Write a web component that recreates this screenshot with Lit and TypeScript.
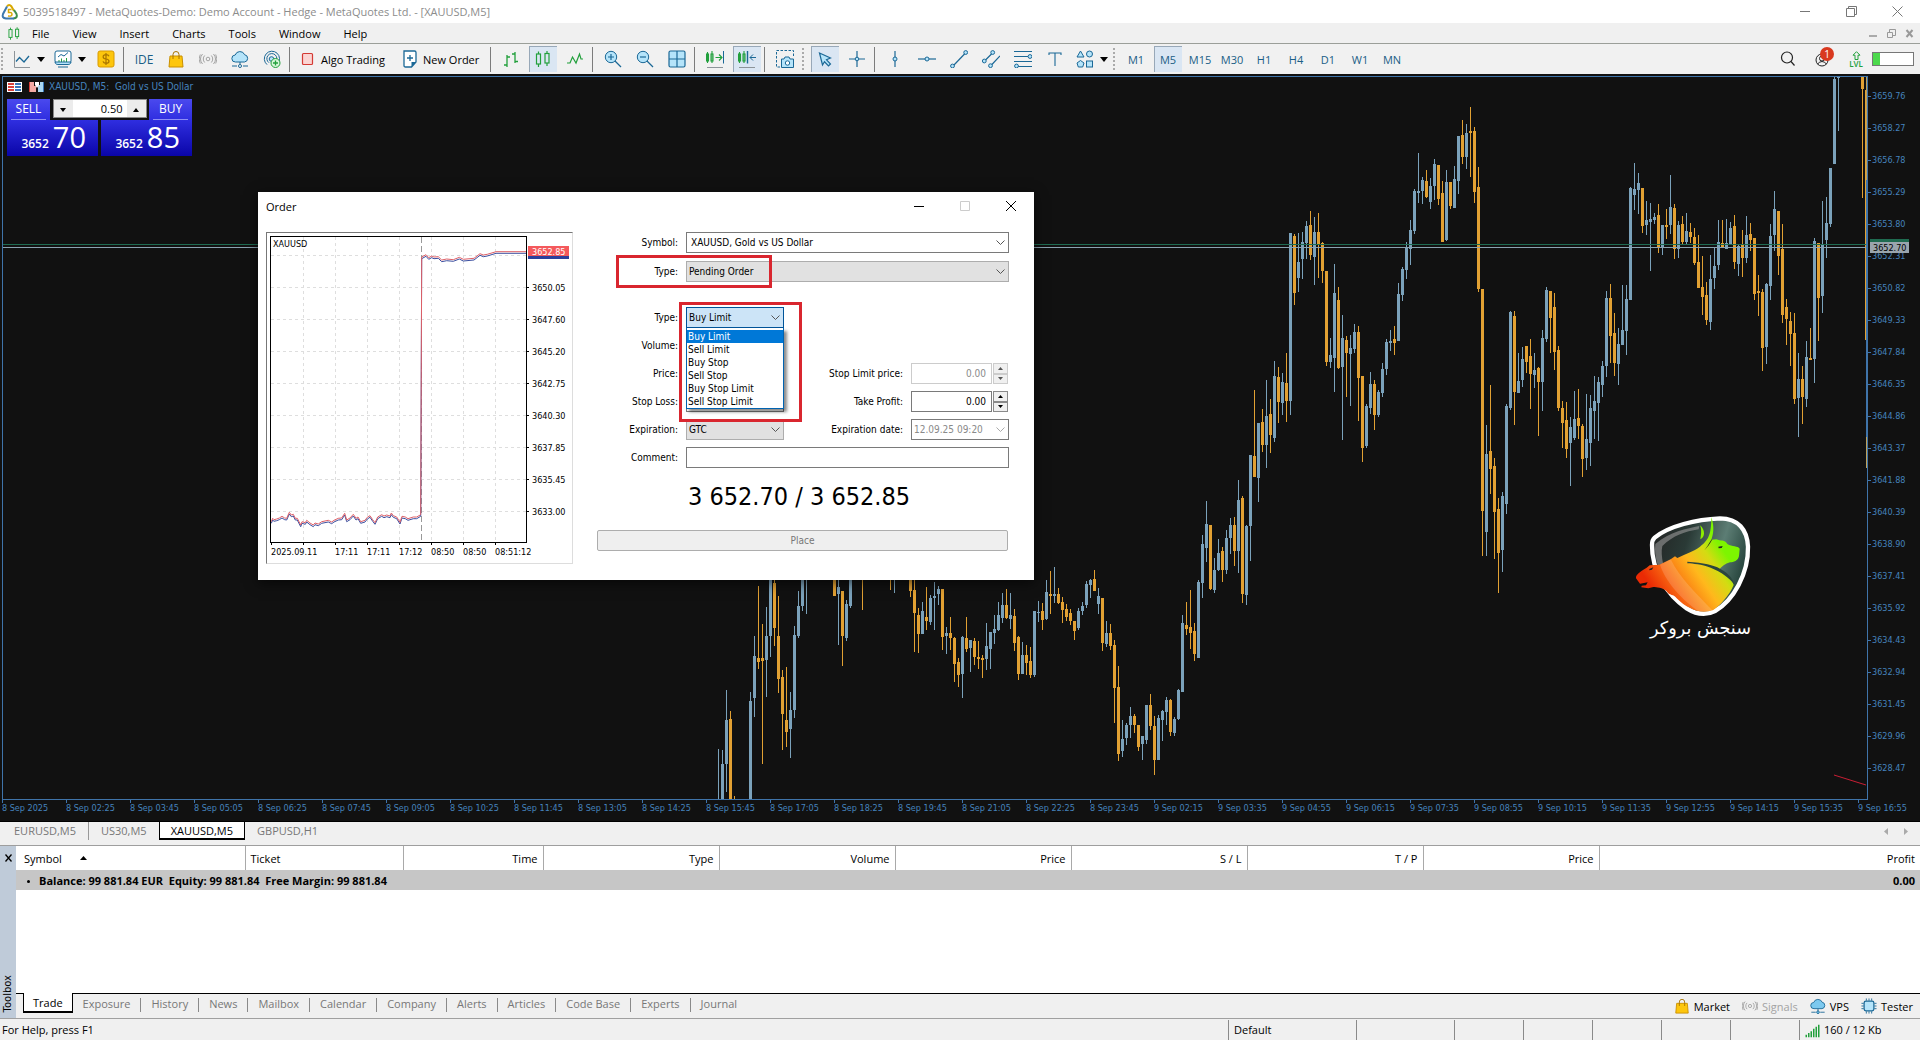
import { LitElement, html, svg, css, TemplateResult } from "lit";
import { customElement, state } from "lit/decorators.js";
import { classMap } from "lit/directives/class-map.js";

/* ---------- icons ---------- */

const BLUE = "#1b6896";
const SKY = "#b5e4fa";
const GREEN = "#22a03c";

const icons: Record<string, TemplateResult> = {
  line: svg`<path d="M1.5 1v16.5H17" stroke="#8d9499"/><path d="M3 11.5 6.500 7.500 11 12l5-6" stroke=${BLUE} stroke-width="1.300"/>`,
  indicators: svg`<rect x="1" y="1" width="16" height="12" rx="2" fill="#fff" stroke=${BLUE}/><path d="M4 7l3-2.500 3 1.500 4-3.500" stroke=${BLUE}/><path d="M5 12V10M7.500 12V8.500M10 12V10M12.500 12V8" stroke=${GREEN}/><path d="M1 12h16c0 2-2 2.500-3 2.500H4c-1 0-3-.5-3-2.500zM4 17h10" fill=${SKY} stroke=${BLUE}/>`,
  dollar: svg`<rect x="1" y="1" width="16" height="16" rx="2" fill="#fdc60d" stroke="#d99a00"/><path d="M12 6.300C11.500 5 10.500 4.700 9 4.700c-3.800 0-3.800 3.900 0 4.300 4 .4 4 4.300 0 4.300-1.600 0-2.700-.6-3-1.900M9 3v12" stroke="#a87400" stroke-width="1.200"/>`,
  bag: svg`<path d="M3 6h12l1 11H2z" fill="#fdc60d" stroke="#c98f00"/><path d="M6 9V4.500a3 3 0 0 1 6 0V9" stroke="#a87400"/>`,
  signal: svg`<g stroke="#a3a3a3"><circle cx="9" cy="9" r="1.800"/><path d="M5.700 5.500a5 5 0 0 0 0 7M12.300 5.500a5 5 0 0 1 0 7M3.500 4a8 8 0 0 0 0 10M14.500 4a8 8 0 0 1 0 10M1.300 4.500a9 9 0 0 0 0 9M16.700 4.500a9 9 0 0 1 0 9"/></g>`,
  cloud: svg`<path d="M4.500 12a3.500 3.500 0 0 1-.3-7 5 5 0 0 1 9.400-.3A3.700 3.700 0 0 1 13.500 12z" fill=${SKY} stroke=${BLUE}/><path d="M9 12v2.500M1 16h5M12 16h5" stroke=${BLUE}/><circle cx="9" cy="16" r="1.500" fill="#fff" stroke=${BLUE}/>`,
  vps: svg`<path d="M9 12v3M1.500 16h5M11.500 16h5" stroke=${BLUE}/><path d="M4.500 12a3.500 3.500 0 0 1-.3-7 5 5 0 0 1 9.400-.3A3.700 3.700 0 0 1 13.500 12z" fill="#7cc9ef" stroke=${BLUE}/><circle cx="9" cy="16" r="1.500" fill="#7cc9ef" stroke=${BLUE}/>`,
  radar: svg`<g stroke=${BLUE}><path d="M14.500 14A7.600 7.600 0 1 0 4 14.600"/><path d="M12.500 12A5 5 0 1 0 6 12.700"/><circle cx="8.500" cy="9" r="2.300" fill=${SKY}/></g><circle cx="12.500" cy="13" r="4.500" fill="#d8f6da" stroke=${GREEN}/><path d="M12.500 10.500v5M10 13h5" stroke=${GREEN} stroke-width="1.300"/>`,
  algo: svg`<rect x="3.500" y="3.500" width="10" height="11" rx="1" fill="#fbd5d3" stroke="#d43a34" stroke-width="1.200"/>`,
  order: svg`<path d="M3 1h10.500Q15 1 15 2.500V12l-4.500 5H4.500Q3 17 3 15.500z" fill="#fff" stroke=${BLUE} stroke-width="1.300"/><path d="M15 12h-4.500v5z" fill=${BLUE}/><path d="M9 5v6M6 8h6" stroke=${BLUE} stroke-width="1.300"/>`,
  bars: svg`<g stroke=${GREEN} stroke-width="1.300"><path d="M5 5v12M5 7h3M2 15h3M13 2v11M10 4h3M13 11.500h3"/></g>`,
  candles: svg`<g stroke=${GREEN} stroke-width="1.200"><rect x="2.500" y="4" width="4" height="10"/><path d="M4.500 1.500V4M4.500 14v3M13 1v2.500M13 13v3"/><rect x="11" y="3.500" width="4" height="9.500"/></g>`,
  zigzag: svg`<path d="M1 13h3l2.500-6 3.500 6 3.500-9L15 9h2" stroke=${GREEN} stroke-width="1.200"/>`,
  zoomin: svg`<circle cx="7" cy="7" r="5.700" fill=${SKY} stroke=${BLUE}/><path d="M11 11l6 6" stroke=${BLUE} stroke-width="1.300"/><path d="M4 7h6M7 4v6" stroke=${BLUE} stroke-width="1.200"/>`,
  zoomout: svg`<circle cx="7" cy="7" r="5.700" fill=${SKY} stroke=${BLUE}/><path d="M11 11l6 6" stroke=${BLUE} stroke-width="1.300"/><path d="M4 7h6" stroke=${BLUE} stroke-width="1.200"/>`,
  tile: svg`<rect x="1" y="1" width="16" height="16" rx="1.500" fill=${SKY} stroke=${BLUE} stroke-width="1.200"/><path d="M9 1v16M1 9h16" stroke=${BLUE} stroke-width="1.200"/>`,
  scroll: svg`<g stroke=${GREEN} stroke-width="1.100"><rect x="0.500" y="4" width="2" height="7"/><rect x="5" y="4" width="2" height="7"/><path d="M1.500 2v11M6 1v12M9.500 7.500h6M13 4.500l3 3-3 3"/></g><path d="M17.500 1v12.500" stroke=${BLUE}/><path d="M1 17.500h16" stroke="#8d9499"/>`,
  shift: svg`<g stroke=${GREEN} stroke-width="1.100"><rect x="0.500" y="4" width="2" height="7"/><rect x="5" y="4" width="2" height="7"/><path d="M1.500 2v11M6 1v12"/></g><path d="M9.500 1v12.500" stroke=${BLUE} stroke-width="1.400"/><path d="M12 7.500h6M15 4.500l-3 3 3 3" stroke=${BLUE}/><path d="M1 17.500h16" stroke="#8d9499"/>`,
  camera: svg`<path d="M4 17H.5V.5h17V6" stroke=${BLUE} stroke-dasharray="2.500 1.500"/><path d="M5.500 9h2.500l1-2h4l1 2h3.500v8.500h-12z" fill=${SKY} stroke=${BLUE}/><circle cx="11.500" cy="13" r="2.200" fill="#fff" stroke=${BLUE}/>`,
  cursor: svg`<path d="M3.500 3l11 5-4 1.800 4 4.200-2 2-4-4.200L6.500 15z" fill=${SKY} stroke=${BLUE} stroke-width="1.200"/>`,
  cross: svg`<path d="M9 1v16M1 9h16" stroke=${BLUE} stroke-width="1.200"/><circle cx="9" cy="9" r="1.800" fill=${SKY} stroke=${BLUE}/>`,
  vline: svg`<path d="M9 1v16" stroke=${BLUE} stroke-width="1.200"/><circle cx="9" cy="9" r="2" fill=${SKY} stroke=${BLUE}/>`,
  hline: svg`<path d="M0 9h18" stroke=${BLUE} stroke-width="1.200"/><circle cx="9" cy="9" r="2" fill=${SKY} stroke=${BLUE}/>`,
  trend: svg`<path d="M3 16L15.500 3" stroke=${BLUE} stroke-width="1.200"/><circle cx="2.500" cy="16" r="1.900" fill=${SKY} stroke=${BLUE}/><circle cx="15.700" cy="2.500" r="1.900" fill=${SKY} stroke=${BLUE}/>`,
  channel: svg`<path d="M2.500 11L11 2.500M8.500 16L18 6" stroke=${BLUE} stroke-width="1.200"/><circle cx="2.300" cy="11" r="1.900" fill=${SKY} stroke=${BLUE}/><circle cx="10.700" cy="2.500" r="1.900" fill=${SKY} stroke=${BLUE}/><circle cx="8.500" cy="15.700" r="1.900" fill=${SKY} stroke=${BLUE}/>`,
  fibo: svg`<path d="M0 1.500h18M0 6.500h14M0 11.500h18M4 16.500h14" stroke=${BLUE} stroke-width="1.200"/><circle cx="16" cy="6.500" r="1.900" fill=${SKY} stroke=${BLUE}/><circle cx="2.500" cy="16" r="1.900" fill=${SKY} stroke=${BLUE}/>`,
  text: svg`<path d="M3 5V3h12v2M9 3v13" stroke=${BLUE} stroke-width="1.100"/>`,
  shapes: svg`<g fill=${SKY} stroke=${BLUE}><path d="M4.500 1l3.500 6H1z"/><circle cx="13.500" cy="4" r="3"/><path d="M4.500 10.500L8 13l-1.300 4H2.300L1 13z"/><rect x="10.500" y="11" width="6" height="6"/></g>`,
  search: svg`<circle cx="8" cy="7.500" r="5.500" stroke="#222" stroke-width="1.200"/><path d="M12 11.500l3.500 4" stroke="#222" stroke-width="1.200"/>`,
  chip: svg`<rect x="3.500" y="3.500" width="11" height="11" rx="2" fill=${SKY} stroke=${BLUE} stroke-width="1.400"/><path d="M6 3V.5M9 3V.5M12 3V.5M6 17.500V15M9 17.500V15M12 17.500V15M3 6H.5M3 9H.5M3 12H.5M17.500 6H15M17.500 9H15M17.500 12H15" stroke=${BLUE}/>`,
  network: svg`<path d="M1.500 17v-3M4.500 17v-5M7.500 17V10M10.500 17V7M13.500 17V4.500M16.500 17V2" stroke=${GREEN} stroke-width="1.800"/>`,
};

const icon = (name: string, cls = "ico") =>
  html`<svg class=${cls} viewBox="0 0 18 18" fill="none" aria-hidden="true">${icons[name]}</svg>`;

/* ---------- candle data: direction, high, open/close top, bottom, low ---------- */

const SEGMENTS: [number, string][] = [
  [718, `u749 800 801 801,u750 764 801 801,u690 720 764 792,d711 719 801 801,d796 800 801 801`],
  [746, `d799 800 801 801,u692 701 801 801,u636 656 698 717,d586 658 662 669,d624 658 661 764,u607 636 660 697,u575 575 636 657,
d575 583 628 646,d596 636 679 693,d670 677 714 750,d667 720 732 747,u692 710 729 758,u626 635 710 718,u591 606 636 638,
u570 570 606 611,u570 570 571 614`],
  [834, `d570 570 596 596,u580 587 594 645,d591 591 636 666,u600 604 638 641,u570 570 606 608`],
  [862, `d570 570 571 610`],
  [890, `d570 570 571 590,u570 570 571 593`],
  [910, `d570 570 591 597,d570 590 613 652,d608 615 634 653,u602 611 634 634,d587 617 621 630,u595 598 622 625,u582 596 598 630,
u586 589 594 605,d589 589 637 650,u627 633 636 654,d617 633 638 650,d637 638 664 682,d658 662 675 687,u636 637 674 698,
d617 638 649 652,u640 640 648 672,d638 641 657 665,d641 657 659 669,d655 658 660 678,u623 646 659 670,u632 632 649 669,
u615 629 633 644,u602 615 630 631,u593 605 618 623,d589 605 618 619,u593 615 619 629,d609 616 643 651,d636 637 674 680,
u642 655 674 674,d645 655 663 675,d647 661 675 678,u611 611 675 677,u601 612 613 622,d603 611 620 630,u580 592 619 620,
d571 594 596 614,u567 594 596 603,d588 594 603 604,d597 602 610 623,d604 609 617 621,d609 613 621 625,d621 621 631 640,
u608 611 628 630,u602 606 611 615,u581 584 605 608,u579 580 585 598,d570 579 591 591,u588 596 604 614,d598 598 643 651,
u621 633 644 647,d624 633 646 650,d640 645 688 723,d666 687 754 761,u720 739 751 757,u723 725 738 745,u707 716 725 738,
d714 716 725 733,d725 725 747 751,u736 736 744 760,u705 705 740 744,d694 705 726 730,d716 726 760 775,u715 718 760 760,
u710 711 720 741,u697 700 712 725,d699 700 732 736,u717 719 733 736,u689 690 719 720,u615 623 692 692,d602 625 629 635,
d590 627 633 649,d623 631 654 661,u580 582 658 658,u535 544 583 598,u501 524 548 562,d525 525 589 590,u558 570 590 593,
u539 553 570 571,d547 551 570 582,u530 538 570 574,u518 525 538 554,d517 525 551 566,u480 500 551 573,d496 498 594 603,
u525 526 595 605,u455 455 526 561,d390 456 477 477,u423 423 478 502,d409 422 445 452,u380 416 445 468,d399 414 435 453,
u361 376 438 442,d367 377 402 423,u373 382 403 415,d353 383 401 422,u233 233 401 415,d234 236 293 305,u233 262 278 292,
u232 242 259 279,u221 226 243 259,d211 225 255 260,u217 232 257 285,d213 232 244 278,d242 243 271 283,d271 271 362 366,
u338 355 362 368,u264 293 358 392,d287 300 368 369,u315 338 367 440,d336 340 353 397,u335 348 354 406,u324 332 349 353,
d326 332 378 421,d376 376 448 462,u404 406 446 448,u372 384 408 414,d380 384 415 430,u390 392 415 417,u363 369 393 397,
u339 342 369 375,u330 341 343 351,d326 339 343 355,u283 294 341 341,u267 269 295 301,u242 248 270 279,u220 230 249 265,
u189 191 231 234,u153 191 193 203,u177 180 191 204,d170 181 197 198,u178 186 202 209,u159 164 186 200,d165 165 199 205,
d181 193 242 242,u170 182 240 241,d182 182 206 209,u166 179 208 208,u136 136 181 194,d120 135 157 164,u124 133 157 169,
d107 131 133 177,d127 131 192 203,d167 187 289 292,d289 289 511 556,u425 454 532 556,d385 451 469 494,d458 466 512 559,
d498 509 553 593,u492 496 550 572,u404 406 504 514,u311 312 408 410,d311 316 392 425,u353 381 393 393,u347 359 380 387,
d346 346 362 373,d339 356 374 409,u353 370 375 388,d367 368 382 436,u330 338 382 411,u287 290 339 342,d291 291 318 353,
d293 307 352 370,d346 350 408 411,d401 408 423 448,d402 420 449 458,u417 427 443 486,u391 419 438 440,d389 418 426 439,
d424 426 459 477,u394 439 458 470,u395 408 443 466,u376 401 411 439,u377 382 403 441,u361 366 385 397,u291 298 366 377,
d284 298 336 363,d313 333 363 376,u328 344 364 385,u285 330 345 345,u285 299 331 355,u187 188 300 300,u163 189 195 210,
u173 183 190 214,d188 188 226 233,u201 220 225 235,u203 219 222 271,u213 217 220 224,d204 215 248 253,u225 225 248 255,
d209 225 227 239,u175 207 225 234,d204 208 249 259,u221 225 249 258,d216 224 242 245,u213 231 242 245,d223 232 237 243,
d228 237 263 265,d235 262 288 288,d256 287 297 315,d282 295 320 325,u255 279 322 330,u248 266 278 289,u220 242 265 270,
d220 243 248 248,u219 243 249 249,u222 228 244 244,d215 226 262 269,u245 246 264 276,d230 244 258 277,u216 235 258 263,
d223 234 240 251,d238 238 294 300,d275 291 293 316,d289 292 348 371,u283 284 347 364,u224 236 286 300,u191 209 235 251,
d211 211 256 275,d224 249 315 323,d299 307 319 345,d312 321 334 366,d313 333 399 404,u353 379 398 437,d366 379 397 424,
u341 357 399 407,d328 358 360 360,u238 241 359 383,d243 243 298 341,u201 245 296 313,u197 223 240 258,u168 168 224 227,
u77 79 164 164,u77 77 78 131`],
  [1862, `d77 77 89 198,d77 90 340 340`],
];

function candlePaths(): { u: string; d: string } {
  const out = { u: "", d: "" };
  for (const [x0, rows] of SEGMENTS) {
    rows.split(",").forEach((row, i) => {
      const r = row.trim();
      const dir = r[0] as "u" | "d";
      const [hi, top, bot, lo] = r.slice(1).split(" ").map(Number);
      const x = x0 + i * 4;
      out[dir] += `M${x} ${hi}h1V${lo}h-1zM${x - 1} ${top}h3V${bot}h-3z`;
    });
  }
  return out;
}
const CANDLES = candlePaths();

const TIMES = [
  "8 Sep 2025", "8 Sep 02:25", "8 Sep 03:45", "8 Sep 05:05", "8 Sep 06:25", "8 Sep 07:45", "8 Sep 09:05", "8 Sep 10:25",
  "8 Sep 11:45", "8 Sep 13:05", "8 Sep 14:25", "8 Sep 15:45", "8 Sep 17:05", "8 Sep 18:25", "8 Sep 19:45", "8 Sep 21:05",
  "8 Sep 22:25", "8 Sep 23:45", "9 Sep 02:15", "9 Sep 03:35", "9 Sep 04:55", "9 Sep 06:15", "9 Sep 07:35", "9 Sep 08:55",
  "9 Sep 10:15", "9 Sep 11:35", "9 Sep 12:55", "9 Sep 14:15", "9 Sep 15:35", "9 Sep 16:55",
];
const PRICES = Array.from({ length: 22 }, (_, i) => (3659.76 - i * 1.49).toFixed(2));

/* ---------- price chart ---------- */

@customElement("price-chart")
export class PriceChart extends LitElement {
  static styles = css`
    :host {
      display: grid; position: relative; flex: 1; min-height: 0; overflow: hidden;
      grid-template-columns: minmax(0, 1fr) 52px; grid-template-rows: minmax(0, 1fr) 21px;
      padding: 2px 0 0 2px; background: #111; color: #4583bd;
      font: 9px/12px "DejaVu Sans Condensed", "DejaVu Sans", sans-serif;
      border-bottom: 1px solid #000; box-sizing: border-box;
    }
    button { font: inherit; border: 0; padding: 0; margin: 0; cursor: default; }
    .plot { position: relative; border: 1px solid #3f74aa; min-width: 0; min-height: 0; overflow: hidden; }
    .candles { display: block; width: 100%; height: 100%; }
    .prices { position: relative; display: flex; flex-direction: column; padding-top: 4px; overflow: hidden; }
    .prices span { flex: none; height: 32px; display: flex; align-items: center; gap: 1px; }
    .prices span::before { content: ""; width: 3px; height: 1px; background: #3f74aa; }
    .tag { position: absolute; left: 2px; top: 163px; width: 39px; box-sizing: border-box; padding-left: 3px; font-weight: 400;
      height: 14px; line-height: 12px; border-top: 3px solid #1f6b50; background: #9aa5ad; color: #000; }
    .times { display: flex; grid-column: 1 / 3; overflow: hidden; }
    .times span { flex: none; width: 64px; white-space: nowrap; line-height: 17px; position: relative; }
    .times span::before { content: ""; display: block; width: 1px; height: 3px; margin-bottom: -3px; background: #3f74aa; }
    .head { position: absolute; left: 7px; top: 7px; display: flex; align-items: center; gap: 5px; white-space: pre; height: 12px; font-size: 10px; }
    .head svg { width: 15px; height: 10px; }
    .head svg + svg { margin-left: 2px; }
    .trade { position: absolute; left: 7px; top: 25px; width: 185px; }
    .row { display: flex; justify-content: space-between; }
    .trade button { color: #fff; font-family: "Open Sans", sans-serif; }
    .trade .side { width: 43px; height: 21px; font-size: 12px; background: linear-gradient(#4a49ee, #2f2ee0); }
    .side span { display: block; margin: 0 4px; line-height: 20px; border-bottom: 1px solid #8f8ff5; }
    .vol { display: flex; height: 19px; border: 1px solid #888; box-sizing: border-box; width: 94px; background: #fff; }
    .vol input { flex: 1; min-width: 0; border: 0; padding: 0 4px 0 0; text-align: right; outline: 0;
      font: 11px "Open Sans", sans-serif; color: #000; background: #fff; }
    .trade .vol button { width: 19px; background: #ececec; color: #000; font-size: 8px; }
    .vol svg { width: 6px; height: 4px; }
    .trade .price { width: 91px; height: 36px; display: flex; align-items: flex-end; justify-content: flex-end;
      padding: 0 12px 5px 0; box-sizing: border-box; gap: 4px; background: linear-gradient(#2f2ee0, #0a05a8); }
    .small { font-size: 12px; line-height: 14px; font-weight: 600; }
    .big { font-size: 29px; line-height: 24px; height: 26px; }
    .logo { position: absolute; right: 167px; top: 439px; width: 120px; height: 128px; }
    .logo text { font: 53px "DejaVu Sans", sans-serif; fill: #fff; }
  `;

  render() {
    return html`
      <div class="plot">
        <svg class="candles" viewBox="3 77 1864 723" preserveAspectRatio="xMaxYMin slice" shape-rendering="crispEdges" role="img" aria-label="XAUUSD M5">
          <path d=${CANDLES.u} fill="#7ba2bb" />
          <path d=${CANDLES.d} fill="#e2a133" />
          <path d="M3 244h1864v1H3z" fill="#1f6b52" />
          <path d="M3 247h1864v1H3z" fill="#8ba3b2" />
          <path d="M1866 180h1v257h-1z" fill="#3f74aa" />
          <path d="M1866 437h1v31h-1zM1866 77h1v103h-1z" fill="#bda25c" />
          <path d="M1834 775l32 10" stroke="#c81e34" fill="none" shape-rendering="auto" />
        </svg>
      </div>
      <div class="prices">${PRICES.map((p) => html`<span>${p}</span>`)}<b class="tag">3652.70</b></div>
      <div class="times">${TIMES.map((t) => html`<span>${t}</span>`)}</div>
      <div class="head">
        <svg viewBox="0 0 15 10"><path d="M0 0h15v10H0z" fill="#fff"/><path d="M1 1h6v2H1zM1 4h6v2H1zM1 7h6v2H1z" fill="#d8403a"/><path d="M8 1h6v2H8zM8 4h6v2H8zM8 7h6v2H8z" fill="#3673b8"/></svg>
        <svg viewBox="0 0 15 10"><path d="M0 0h5v4h2v6H0z" fill="#f3aaa5"/><path d="M15 0h-4v3H9v7h6z" fill="#a9d6f2"/><path d="M6 0h4v3l-2 3-2-3z" fill="#fff"/><path d="M0 0h1v10H0z" fill="#d8403a"/><path d="M14 0h1v10h-1z" fill="#3673b8"/></svg>
        <span>XAUUSD, M5:  Gold vs US Dollar</span>
      </div>
      <div class="trade">
        <div class="row">
          <button class="side"><span>SELL</span></button>
          <div class="vol">
            <button aria-label="Decrease volume"><svg viewBox="0 0 6 4"><path d="M0 0h6L3 4z"/></svg></button>
            <input aria-label="Volume" .value=${"0.50"} />
            <button aria-label="Increase volume"><svg viewBox="0 0 6 4"><path d="M0 4h6L3 0z"/></svg></button>
          </div>
          <button class="side"><span>BUY</span></button>
        </div>
        <div class="row">
          <button class="price"><span class="small">3652</span><span class="big">70</span></button>
          <button class="price"><span class="small">3652</span><span class="big">85</span></button>
        </div>
      </div>
      <svg class="logo" viewBox="399 129 360 384" role="img" aria-label="سنجش بروکر">
        <defs>
          <linearGradient id="back" x1="0" y1="0" x2="1" y2="0.300"><stop offset="0" stop-color="#222"/><stop offset="0.400" stop-color="#2a3a36"/><stop offset="0.750" stop-color="#5c7d74"/><stop offset="1" stop-color="#2c4a42"/></linearGradient>
          <linearGradient id="beast" gradientUnits="userSpaceOnUse" x1="450" y1="370" x2="680" y2="215"><stop offset="0.050" stop-color="#ea2a04"/><stop offset="0.280" stop-color="#f96a12"/><stop offset="0.550" stop-color="#ffb81c"/><stop offset="0.750" stop-color="#d3dc12"/><stop offset="0.920" stop-color="#7df500"/></linearGradient>
        </defs>
        <path d="M464 203C505 168 590 148 660 145C715 145 742 180 744 230C746 310 700 392 645 423C620 436 590 434 560 415C500 375 455 300 456 225Q456 210 464 203Z" fill="url(#back)" stroke="#fff" stroke-width="13"/>
        <path d="M466 222C510 184 560 176 598 168L596 178C555 185 520 196 487 228Q482 250 490 285L474 288Q462 250 466 222Z" fill="#999" opacity=".6"/>
        <path d="M408 325C407 315 415 308 440 293L449 286L478 284L512 268L525 259L532 264C560 250 580 245 600 230C622 212 634 200 634 141C644 172 640 192 634 209L649 208C662 214 674 208 682 222C696 231 714 227 719 236L717 258C715 272 700 277 690 277C675 281 665 290 658 298C684 310 696 330 701 345C690 375 655 412 638 421C600 434 560 415 530 385C522 372 508 378 500 364C488 352 470 352 460 351L445 355L424 352L425 347L438 346L443 337L420 341Z" fill="url(#beast)"/>
        <path d="M600 166C606 180 603 196 601 208C615 203 617 180 600 166Z" fill="#8df000"/>
        <path d="M562 275C612 279 640 284 660 296C690 312 700 330 703 343C690 325 664 306 632 293C604 283 580 281 562 280Z" fill="#2b463e"/>
        <path d="M612 242C622 232 630 222 637 208L634 209C626 222 620 232 612 242ZM655 230l13-2-3 6-9 1zM448 297l12-5-4 7-8 2z" fill="#222"/>
        <path d="M480 284C500 345 560 400 603 429Q625 428 637 421C590 372 540 325 512 268Z" fill="#fff" opacity=".16"/>
        <text x="753" y="492" direction="rtl">سنجش بروکر</text>
      </svg>
    `;
  }
}

/* ---------- order dialog ---------- */

const TICKS: [number, number][] = [
  [64, 1010], [68, 1000], [72, 1004], [80, 1002], [88, 999], [96, 994], [104, 999], [110, 1000], [118, 982], [124, 990], [130, 988], [136, 1000], [142, 1000],
  [152, 1020], [156, 1010], [166, 1013], [170, 1006], [180, 1014], [190, 1020], [195, 1014], [205, 1017], [215, 1010], [235, 1006], [245, 1011], [252, 1006],
  [265, 1000], [275, 999], [284, 985], [290, 1005], [300, 999], [310, 988], [318, 1000], [324, 996], [332, 1010], [345, 1006], [352, 997], [360, 992],
  [368, 1004], [375, 1013], [383, 996], [395, 989], [402, 993], [410, 990], [420, 993], [424, 984], [430, 992], [440, 996], [450, 1012], [456, 994],
  [466, 996], [474, 1001], [490, 996], [500, 996], [512, 989], [515, 216], [528, 209], [536, 218], [545, 213], [552, 216], [565, 215], [575, 225],
  [590, 222], [610, 224], [628, 217], [640, 223], [672, 220], [690, 206], [700, 210], [712, 208], [738, 200], [829, 200],
];
const tickPath = (dy: number) => TICKS.map(([x, y]) => `${(250 + x / 3).toFixed(1)},${(185 + (y + dy) / 3).toFixed(1)}`).join(" ");

@customElement("order-dialog")
export class OrderDialog extends LitElement {
  @state() private kind = "Buy Limit";

  static styles = css`
    :host { display: block; position: absolute; left: 258px; top: 192px; width: 776px; height: 388px; box-sizing: border-box;
      background: #fff; color: #000; box-shadow: 0 3px 12px rgba(0, 0, 0, 0.6);
      font: 10px/14px "DejaVu Sans Condensed", "DejaVu Sans", sans-serif; }
    button, input, select { font: inherit; color: inherit; margin: 0; box-sizing: border-box; border-radius: 0; outline: 0; }
    header { display: flex; align-items: center; height: 28px; padding-left: 8px; font: 11px "Open Sans", sans-serif; }
    header h2 { flex: 1; margin: 0; font: inherit; }
    header button { width: 46px; height: 28px; padding: 0; border: 0; background: none; }
    header svg { width: 10px; height: 10px; display: block; margin: auto; }
    .body { display: grid; grid-template-columns: 307px 412px; justify-content: space-between; padding: 12px 25px 0 8px; }
    .ticks { box-sizing: border-box; width: 307px; height: 332px; display: block; border: 1px solid #ddd; border-top-color: #777; border-left-color: #777; }
    .ticks text { font: 9px "DejaVu Sans Condensed", "DejaVu Sans", sans-serif; }
    .form { display: grid; grid-template-columns: 81px 98px 1fr 98px; column-gap: 8px; align-content: start; }
    .form > label { text-align: right; align-self: center; white-space: nowrap; }
    .wide { grid-column: 2 / 5; }
    .tall { height: 21px; }
    .std { height: 21px; margin-bottom: 7px; }
    label.std { height: auto; }
    .top { margin-bottom: 8px; }
    .kind { margin-bottom: 25px; }
    input, .sel select { border: 1px solid #7a7a7a; background: #fff; padding: 0 4px; width: 100%; height: 100%; }
    .sel { position: relative; }
    .sel select { appearance: none; padding: 0 2px; }
    .sel.white select { padding-left: 4px; }
    .sel svg { position: absolute; right: 4px; top: 8px; width: 9px; height: 6px; pointer-events: none; }
    .gray select { background: #e1e1e1; border-color: #adadad; }
    .open select { background: #cce4f7; border-color: #005499; }
    .spin { display: grid; grid-template-columns: 1fr 15px; grid-template-rows: 1fr 1fr; column-gap: 1px; padding-right: 1px; }
    .spin input { grid-row: 1 / 3; text-align: right; padding-right: 5px; }
    .spin button { border: 1px solid #8a8a8a; background: #f0f0f0; padding: 0; display: flex; align-items: center; justify-content: center; }
    .spin button svg { width: 5px; height: 3px; }
    .off { color: #8a8a8a; }
    .off input { border-color: #ccc; }
    .off button { border-color: #ccc; color: #555; }
    .date input { border-color: #7a7a7a; padding: 0 2px; }
    .date svg { opacity: 0.5; }
    label.off, label { color: #000; }
    .list { position: absolute; z-index: 2; left: 0; top: 21px; width: 98px; box-sizing: border-box; margin: 0; padding: 2px 0 0;
      list-style: none; background: #fff; border: 1px solid #0063b1; border-top: 0; box-shadow: 3px 3px 3px rgba(0, 0, 0, 0.45); }
    .list button { display: block; width: 100%; height: 13px; line-height: 13px; padding: 0 0 0 1px; border: 0; text-align: left; background: none; }
    .list button.on { background: #0078d7; color: #fff; }
    .quote { grid-column: 2 / 5; font-size: 25px; line-height: 30px; margin: 7px 0 18px 2px; }
    .place { grid-column: 1 / 5; height: 21px; border: 1px solid #adadad; border-radius: 2px; background: #efefef; color: #777; margin-right: 1px; }
    .mark { position: absolute; border: 3px solid #d9262f; box-sizing: border-box; pointer-events: none; z-index: 3; }
    .mark.a { left: 358px; top: 63px; width: 156px; height: 33px; }
    .mark.b { left: 421px; top: 110px; width: 123px; height: 120px; }
  `;

  private chev = html`<svg viewBox="0 0 9 6" fill="none" stroke="#555"><path d="M.5.5l4 4 4-4" /></svg>`;
  private up = html`<svg viewBox="0 0 5 3"><path d="M0 3h5L2.500 0z" fill="currentColor"/></svg>`;
  private down = html`<svg viewBox="0 0 5 3"><path d="M0 0h5L2.500 3z" fill="currentColor"/></svg>`;

  render() {
    const vx = [303, 335, 367, 399, 431, 463, 495];
    const hy = [255, 287, 319, 351, 383, 415, 447, 479, 511];
    const labels = ["3650.05", "3647.60", "3645.20", "3642.75", "3640.30", "3637.85", "3635.45", "3633.00"];
    const times: [number, string][] = [[271, "2025.09.11"], [335, "17:11"], [367, "17:11"], [399, "17:12"], [431, "08:50"], [463, "08:50"], [495, "08:51:12"]];
    const kinds = ["Buy Limit", "Sell Limit", "Buy Stop", "Sell Stop", "Buy Stop Limit", "Sell Stop Limit"];
    return html`
      <header>
        <h2>Order</h2>
        <button aria-label="Minimize"><svg viewBox="0 0 10 10"><path d="M0 5h10v1H0z"/></svg></button>
        <button aria-label="Maximize" disabled><svg viewBox="0 0 10 10"><path d="M.5.5h9v9h-9z" fill="none" stroke="#ccc"/></svg></button>
        <button aria-label="Close"><svg viewBox="0 0 10 10"><path d="M0 0l10 10M10 0L0 10" stroke="#000"/></svg></button>
      </header>
      <div class="body">
        <svg class="ticks" viewBox="267 233 305 330">
          <g stroke="#dedede" stroke-dasharray="3 3" shape-rendering="crispEdges">
            ${vx.map((x) => svg`<path d=${`M${x}.5 237V542`} />`)}
            ${hy.map((y) => svg`<path d=${`M271 ${y}.5H526`} />`)}
          </g>
          <path d="M421.500 237v305" stroke="#999" stroke-dasharray="6 3" shape-rendering="crispEdges"/>
          <polyline points=${tickPath(5)} fill="none" stroke="#3b4fa0" stroke-width="1"/>
          <polyline points=${tickPath(0)} fill="none" stroke="#de6067" stroke-width="1"/>
          <rect x="270.500" y="236.500" width="256" height="306" fill="none" stroke="#000"/>
          <path d=${hy.slice(1).map((y) => `M527 ${y}.5h2`).join("") + [271, ...vx].map((x) => `M${x}.5 543v2`).join("")} stroke="#000"/>
          <text x="273" y="247">XAUUSD</text>
          <path d="M528 256h41v3h-41z" fill="#2c3f9b"/>
          <path d="M528 246h41v10h-41z" fill="#f4595c"/>
          <text x="532" y="255" fill="#fff">3652.85</text>
          ${labels.map((t, i) => svg`<text x="532" y=${291 + i * 32}>${t}</text>`)}
          ${times.map(([x, t]) => svg`<text x=${x} y="555">${t}</text>`)}
        </svg>
        <form class="form" @submit=${(e: Event) => e.preventDefault()}>
          <label class="top" for="symbol">Symbol:</label>
          <div class="wide sel white tall top"><select id="symbol"><option>XAUUSD, Gold vs US Dollar</option></select>${this.chev}</div>
          <label class="kind" for="mode">Type:</label>
          <div class="wide sel gray tall kind"><select id="mode"><option>Pending Order</option></select>${this.chev}</div>

          <label class="std" for="kind">Type:</label>
          <div class="sel open std">
            <select id="kind" .value=${this.kind}>${kinds.map((k) => html`<option ?selected=${k === this.kind}>${k}</option>`)}</select>${this.chev}
            <ul class="list">
              ${kinds.map((k) => html`<li><button type="button" class=${classMap({ on: k === this.kind })} @click=${() => (this.kind = k)}>${k}</button></li>`)}
            </ul>
          </div>
          <span></span><span></span>

          <label class="std" for="volume">Volume:</label>
          <div class="std"><input id="volume" /></div>
          <span></span><span></span>

          <label class="std" for="price">Price:</label>
          <div class="std"><input id="price" /></div>
          <label class="std" for="slp">Stop Limit price:</label>
          <div class="std spin off"><input id="slp" disabled .value=${"0.00"} /><button type="button" disabled aria-label="Up">${this.up}</button><button type="button" disabled aria-label="Down">${this.down}</button></div>

          <label class="std" for="sl">Stop Loss:</label>
          <div class="std"><input id="sl" /></div>
          <label class="std" for="tp">Take Profit:</label>
          <div class="std spin"><input id="tp" .value=${"0.00"} /><button type="button" aria-label="Up">${this.up}</button><button type="button" aria-label="Down">${this.down}</button></div>

          <label class="std" for="exp">Expiration:</label>
          <div class="sel gray std"><select id="exp"><option>GTC</option></select>${this.chev}</div>
          <label class="std" for="date">Expiration date:</label>
          <div class="sel std date off"><input id="date" disabled .value=${"12.09.25 09:20"} />${this.chev}</div>

          <label class="std" for="comment">Comment:</label>
          <div class="wide std"><input id="comment" /></div>
          <div class="quote">3 652.70 / 3 652.85</div>
          <button class="place" disabled>Place</button>
        </form>
      </div>
      <div class="mark a"></div>
      <div class="mark b"></div>
    `;
  }
}

/* ---------- terminal window ---------- */

@customElement("app-root")
export class AppRoot extends LitElement {
  @state() private frame = "M5";
  @state() private tab = "Trade";
  @state() private chartTab = "XAUUSD,M5";
  @state() private level = 18;

  static styles = css`
    :host { display: flex; flex-direction: column; position: relative; min-height: 100vh; height: 100vh; overflow: hidden;
      background: #f0f0f0; color: #000; font: 11px/15px "Open Sans", "Noto Sans", sans-serif; }
    button { font: inherit; color: inherit; border: 0; background: none; padding: 0; margin: 0; cursor: default; white-space: nowrap; }
    .ico { width: 18px; height: 18px; display: block; flex: none; }
    .title { display: flex; align-items: center; height: 23px; background: #fff; color: #8c8c8c; padding-left: 1px; gap: 4px; }
    .title h1 { flex: 1; margin: 0; font: inherit; }
    .controls { display: flex; }
    .title button { width: 46px; height: 20px; display: flex; align-items: center; justify-content: center; }
    .title button svg { width: 11px; height: 11px; }
    .menu { display: flex; align-items: center; border-bottom: 1px solid #9b9f99; padding-left: 7px; box-sizing: border-box; height: 21px; }
    .menu .ico { width: 14px; height: 15px; }
    .menu a { color: inherit; text-decoration: none; padding: 0 12px 0 11px; }
    .menu .mdi { margin-left: auto; display: flex; padding-right: 2px; }
    .mdi button { width: 18px; display: flex; justify-content: center; }
    .mdi svg { width: 9px; height: 9px; }
    .tools { display: flex; align-items: center; height: 30px; background: #f1f1f1; color: #1b5e86; font-size: 12px; }
    .tools > * { flex: none; }
    .tool { width: 32px; height: 26px; display: flex; align-items: center; justify-content: center; }
    .tool.on { background: #dae6f3; box-shadow: inset 1px 1px 0 #98a8b8; width: 28px; margin: 0 2px; }
    .frame { font-size: 11px; }
    .drop { width: 41px; gap: 6px; }
    .drop::after { content: ""; border: 4px solid transparent; border-top: 5px solid #000; border-bottom: 0; }
    .sep { width: 6px; height: 25px; background: linear-gradient(90deg, transparent 1px, #7c7c7c 1px, #7c7c7c 2px, transparent 2px); }
    .grip { width: 8px; height: 25px; background: radial-gradient(circle at 2px 2px, #aaa 1px, transparent 1px) 0 0 / 8px 4px; }
    .label { display: flex; align-items: center; height: 26px; color: #000; gap: 4px; font-size: 11px; }
    .algo { width: 102px; padding-left: 5px; }
    .neworder { width: 93px; padding-left: 5px; }
    .tools .right { flex: 1; display: flex; align-items: center; justify-content: flex-end; padding-right: 6px; }
    .right > button { position: relative; display: flex; justify-content: center; }
    .find { width: 34px; }
    .account { width: 38px; }
    .badge { position: absolute; left: 15px; top: -3px; width: 14px; height: 14px; border-radius: 50%; background: #d9391f; color: #fff; font-size: 10px; line-height: 14px; }
    .right .lvl { width: 26px; flex-direction: column; align-items: center; color: #22a03c; font-size: 8px; font-weight: 600; line-height: 8px; margin-right: 3px; }
    .lvl svg { width: 9px; height: 9px; }
    .battery { width: 42px; height: 14px; border: 1px solid #777; background: #fff; box-sizing: border-box; }
    .battery div { height: 100%; background: #4cd94c; }
    .charts { display: flex; height: 24px; align-items: flex-start; border-bottom: 1px solid #9e9e9e; box-sizing: border-box; color: #777; padding-left: 2px; }
    .charts button { height: 18px; line-height: 18px; padding: 0 12px; }
    .charts .div { border-left: 1px solid #999; }
    .charts button.on { background: #fff; color: #000; border: 1px solid #000; border-top: 0; border-bottom-width: 2px; padding: 0 11px; }
    .arrows { margin-left: auto; display: flex; gap: 16px; padding: 6px 12px 0 0; }
    .arrows svg { width: 4px; height: 7px; }
    .toolbox { display: grid; grid-template-columns: 16px minmax(0, 1fr); height: 172px; }
    .strip { background: #bfcbd9; display: flex; flex-direction: column; justify-content: space-between; align-items: center; padding: 4px 0 6px; box-sizing: border-box; }
    .strip svg { width: 7px; height: 8px; }
    .strip span { writing-mode: vertical-rl; transform: rotate(180deg); font: 10px/14px "DejaVu Sans", sans-serif; }
    .panel { display: flex; flex-direction: column; background: #fff; min-width: 0; }
    .sheet { flex: 1; }
    table { width: 100%; border-collapse: collapse; table-layout: fixed; }
    th { height: 24px; padding: 0 5px; font-weight: 400; text-align: right; border-right: 1px solid #a9a9a9; box-sizing: border-box; }
    th:last-child { border: 0; }
    th.l { text-align: left; }
    th.first { padding-left: 8px; }
    th svg { width: 7px; height: 4px; margin: 0 0 3px 15px; }
    td { height: 20px; padding: 0 5px; background: #c6c6c6; font-weight: 700; white-space: pre; }
    td:first-child { padding-left: 9px; }
    td:last-child { text-align: right; }
    td i { display: inline-block; width: 3px; height: 3px; background: #000; border-radius: 50%; margin: 0 9px 2px 2px; }
    .c1 { width: 229px; } .c2 { width: 158px; } .c3 { width: 140px; } .c4 { width: 176px; }
    .tabs { display: flex; align-items: flex-start; height: 25px; border-top: 1px solid #000; background: #f0f0f0; color: #777; box-sizing: border-box; padding-left: 7px; }
    .tabs > button { position: relative; padding: 0 11px 0 10px; height: 19px; line-height: 17px; }
    .tabs > button + button::after { content: ""; position: absolute; right: 0; top: 4px; height: 14px; border-right: 1px solid #8a8a8a; }
    .tabs > button:nth-child(12)::after { display: none; }
    .tabs > button.on { background: #fff; color: #000; border: 1px solid #000; border-top: 0; border-bottom-width: 2px; margin-top: -1px; height: 20px; padding: 0 9px; }
    .links { margin-left: auto; display: flex; gap: 12px; padding: 4px 7px 0 0; color: #000; }
    .links button { display: flex; align-items: center; gap: 4px; }
    .links .ico { width: 16px; height: 16px; }
    .links .muted { color: #a3a3a3; }
    .status { display: flex; height: 22px; border-top: 1px solid #a0a0a0; box-sizing: border-box; align-items: stretch; line-height: 22px; }
    .status > span { border-left: 1px solid #8a8a8a; box-sizing: border-box; padding-left: 5px; margin-top: 1px; display: flex; gap: 4px; align-items: center; white-space: nowrap; }
    .status > span:first-child { flex: 1; border: 0; padding-left: 2px; }
    .s128 { width: 128px; } .s98 { width: 98px; } .s69 { width: 69px; } .s121 { width: 121px; }
    .status .ico { width: 15px; height: 15px; }
  `;

  private tool(name: string, label: string, cls = "") {
    return html`<button class="tool ${cls}" aria-label=${label}>${icon(name)}</button>`;
  }

  render() {
    const sep = html`<i class="sep"></i>`;
    const grip = html`<i class="grip"></i>`;
    const frames = ["M1", "M5", "M15", "M30", "H1", "H4", "D1", "W1", "MN"];
    const tabs = ["Trade", "Exposure", "History", "News", "Mailbox", "Calendar", "Company", "Alerts", "Articles", "Code Base", "Experts", "Journal"];
    const charts = ["EURUSD,M5", "US30,M5", "XAUUSD,M5", "GBPUSD,H1"];
    const cols = ["Time", "Type", "Volume", "Price", "S / L", "T / P", "Price", "Profit"];
    return html`
      <div class="title">
        <svg class="ico" viewBox="0 0 18 18" fill="none"><path d="M6 3.500Q8 .5 10.500 3.500L13 8" stroke="#d8a800" stroke-width="2"/><path d="M13 7l2.500 4q1.500 4-3 4.500" stroke="#3f8f4d" stroke-width="2"/><path d="M13 15.500H5Q.5 15 2 11L6 3.500" stroke="#3d78ad" stroke-width="2"/><path d="M10.500 6.500H7.500V9.500Q11 9 11 11.300T7 13" stroke="#d8a800" stroke-width="1.500"/></svg>
        <h1>5039518497 - MetaQuotes-Demo: Demo Account - Hedge - MetaQuotes Ltd. - [XAUUSD,M5]</h1>
        <div class="controls">
          <button aria-label="Minimize"><svg viewBox="0 0 11 11"><path d="M0 5h10v1H0z" fill="#777"/></svg></button>
          <button aria-label="Restore"><svg viewBox="0 0 11 11" fill="none" stroke="#777"><path d="M.5 2.500h8v8h-8zM2.500 2.500v-2h8v8h-2"/></svg></button>
          <button aria-label="Close"><svg viewBox="0 0 11 11" stroke="#777"><path d="M.5.5l10 10M10.500.5l-10 10"/></svg></button>
        </div>
      </div>
      <nav class="menu">
        ${icon("candles")}
        ${["File", "View", "Insert", "Charts", "Tools", "Window", "Help"].map((m) => html`<a href="#">${m}</a>`)}
        <div class="mdi">
          <button aria-label="Minimize chart"><svg viewBox="0 0 9 9"><path d="M0 6h8v2H0z" fill="#aaa"/></svg></button>
          <button aria-label="Restore chart"><svg viewBox="0 0 9 9" fill="none" stroke="#999"><path d="M.5 3.500h5v5h-5zM2.500 3V.5h6v6H6"/></svg></button>
          <button aria-label="Close chart"><svg viewBox="0 0 9 9" stroke="#999" stroke-width="2"><path d="M1.500 1l6 7M7.500 1l-6 7"/></svg></button>
        </div>
      </nav>
      <div class="tools">
        ${grip}${this.tool("line", "Chart type", "drop")}${this.tool("indicators", "Indicators", "drop")}${this.tool("dollar", "Symbols")}
        ${sep}<button class="tool">IDE</button>${this.tool("bag", "Market")}${this.tool("signal", "Signals")}${this.tool("cloud", "VPS")}${this.tool("radar", "Add service")}
        ${sep}<button class="label algo">${icon("algo")}Algo Trading</button><button class="label neworder">${icon("order")}New Order</button>
        ${sep}${this.tool("bars", "Bars")}${this.tool("candles", "Candles", "on")}${this.tool("zigzag", "Line")}
        ${sep}${this.tool("zoomin", "Zoom in")}${this.tool("zoomout", "Zoom out")}${this.tool("tile", "Tile windows")}
        ${sep}${this.tool("scroll", "Auto scroll")}${this.tool("shift", "Chart shift", "on")}
        ${sep}${this.tool("camera", "Screenshot")}
        ${grip}${this.tool("cursor", "Cursor", "on")}${this.tool("cross", "Crosshair")}
        ${sep}${this.tool("vline", "Vertical line")}${this.tool("hline", "Horizontal line")}${this.tool("trend", "Trendline")}${this.tool("channel", "Channel")}${this.tool("fibo", "Fibonacci")}${this.tool("text", "Text")}${this.tool("shapes", "Shapes", "drop")}
        ${grip}${frames.map((f) => html`<button class=${classMap({ tool: true, frame: true, on: f === this.frame })} @click=${() => (this.frame = f)}>${f}</button>`)}
        <div class="right">
          <button class="find" aria-label="Search">${icon("search")}</button>
          <button class="account" aria-label="Account">
            <svg class="ico" viewBox="0 0 18 18" fill="none" stroke="#222"><circle cx="7" cy="10" r="6"/><circle cx="7" cy="8.500" r="2.500"/><path d="M2.500 14q4.500-5 9 0"/></svg>
            <span class="badge">1</span>
          </button>
          <button class="lvl"><svg viewBox="0 0 9 9" fill="none" stroke=${GREEN}><path d="M4.500 .700l3.500 3.500H6V8.500H3V4.200H1z"/></svg>LVL</button>
          <div class="battery" role="meter" aria-label="Level" aria-valuemin="0" aria-valuemax="100" aria-valuenow=${this.level}><div style="width:${this.level}%"></div></div>
        </div>
      </div>

      <price-chart></price-chart>

      <div class="charts">
        ${charts.map((c, i) => html`<button class=${classMap({ on: c === this.chartTab, div: i === 1 })} @click=${() => (this.chartTab = c)}>${c}</button>`)}
        <div class="arrows"><svg viewBox="0 0 4 7"><path d="M4 0v7L0 3.500z" fill="#aaa"/></svg><svg viewBox="0 0 4 7"><path d="M0 0v7l4-3.500z" fill="#aaa"/></svg></div>
      </div>

      <section class="toolbox">
        <div class="strip">
          <button aria-label="Close toolbox"><svg viewBox="0 0 7 8" stroke="#000" stroke-width="1.300"><path d="M.5.5l6 7M6.500.5l-6 7"/></svg></button>
          <span>Toolbox</span>
        </div>
        <div class="panel">
          <div class="sheet">
            <table>
              <colgroup><col class="c1" /><col class="c2" /><col class="c3" />${[1, 2, 3, 4, 5, 6].map(() => html`<col class="c4" />`)}<col /></colgroup>
              <thead><tr>
                <th class="l first">Symbol <svg viewBox="0 0 7 4"><path d="M0 4h7L3.500 0z"/></svg></th><th class="l">Ticket</th>
                ${cols.map((c) => html`<th>${c}</th>`)}
              </tr></thead>
              <tbody><tr><td colspan="9"><i></i>Balance: 99 881.84 EUR  Equity: 99 881.84  Free Margin: 99 881.84</td><td>0.00</td></tr></tbody>
            </table>
          </div>
          <div class="tabs">
            ${tabs.map((t) => html`<button class=${classMap({ on: t === this.tab })} @click=${() => (this.tab = t)}>${t}</button>`)}
            <div class="links">
              <button>${icon("bag")}Market</button><button class="muted">${icon("signal")}Signals</button>
              <button>${icon("vps")}VPS</button><button>${icon("chip")}Tester</button>
            </div>
          </div>
        </div>
      </section>

      <footer class="status">
        <span>For Help, press F1</span><span class="s128">Default</span><span class="s98"></span><span class="s69"></span><span class="s69"></span>
        <span class="s69"></span><span class="s69"></span><span class="s69"></span><span class="s121">${icon("network")}160 / 12 Kb</span>
      </footer>

      <order-dialog></order-dialog>
    `;
  }
}
